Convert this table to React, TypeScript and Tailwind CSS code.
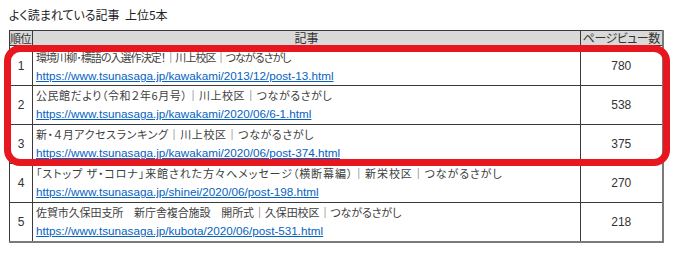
const rows = [
  {
    rank: 1,
    title: '環境川柳･標語の入選作決定！｜川上校区｜つながるさがし',
    track: 'tracking-[-0.95px]',
    url: 'https://www.tsunasaga.jp/kawakami/2013/12/post-13.html',
    views: 780,
  },
  {
    rank: 2,
    title: '公民館だより（令和２年6月号）｜川上校区｜つながるさがし',
    track: 'tracking-[0.55px]',
    url: 'https://www.tsunasaga.jp/kawakami/2020/06/6-1.html',
    views: 538,
  },
  {
    rank: 3,
    title: '新・４月アクセスランキング｜川上校区｜つながるさがし',
    track: 'tracking-[0.6px]',
    url: 'https://www.tsunasaga.jp/kawakami/2020/06/post-374.html',
    views: 375,
  },
  {
    rank: 4,
    title: '「ストップ ザ・コロナ」来館された方々へメッセージ（横断幕編）｜新栄校区｜つながるさがし',
    track: 'tracking-[0.9px]',
    url: 'https://www.tsunasaga.jp/shinei/2020/06/post-198.html',
    views: 270,
  },
  {
    rank: 5,
    title: '佐賀市久保田支所　新庁舎複合施設　開所式｜久保田校区｜つながるさがし',
    track: 'tracking-[-0.1px]',
    url: 'https://www.tsunasaga.jp/kubota/2020/06/post-531.html',
    views: 218,
  },
];

const jp = "[font-family:'Noto_Sans_CJK_JP','Liberation_Sans',sans-serif] [font-feature-settings:'palt']";

export default function App() {
  return (
    <div className="relative h-[253px] w-[680px] overflow-hidden bg-white pl-[9px] pt-[7px] text-[#333]">
      {/* 見出し */}
      <h2 className={`${jp} text-[12px] leading-[16px] text-[#222]`}>
        よく読まれている記事&nbsp;&nbsp;上位5本
      </h2>

      {/* ランキング表 */}
      <table className="mt-[7px] w-[653px] table-fixed border-collapse border border-r-2 border-b-2 border-[#3a3a3a] border-r-[#7a7a7a] border-b-[#7a7a7a]">
        <colgroup>
          <col className="w-[23px]" />
          <col className="w-[548px]" />
          <col className="w-[82px]" />
        </colgroup>
        <thead>
          <tr className="h-[15px] bg-[#d9d9d9]">
            <th className={`${jp} border border-[#3a3a3a] p-0 text-left text-[11px] font-normal leading-[14px] tracking-[-0.5px]`}>
              順位
            </th>
            <th className={`${jp} border border-[#3a3a3a] p-0 text-center text-[12px] font-normal leading-[14px]`}>
              記事
            </th>
            <th className={`${jp} border border-[#3a3a3a] p-0 text-center text-[12px] font-normal leading-[14px] tracking-[-0.5px]`}>
              ページビュー数
            </th>
          </tr>
        </thead>
        <tbody>
          {rows.map((r) => (
            <tr key={r.rank} className="h-[39px]">
              <td className="border border-[#3a3a3a] p-0 text-center align-middle text-[12px] [font-family:'Liberation_Sans',sans-serif]">
                {r.rank}
              </td>
              <td
                className={`border border-[#3a3a3a] pb-0 pl-[3px] pr-0 align-top ${r.rank === 1 ? 'pt-[2px]' : 'pt-0'}`}
              >
                <div className={`${jp} ${r.track} whitespace-nowrap text-[11px] leading-[19px] text-[#404040]`}>
                  {r.title}
                </div>
                <a
                  href="#"
                  className="block whitespace-nowrap text-[11.7px] leading-[18px] text-[#0563c1] underline [font-family:'Liberation_Sans',sans-serif]"
                >
                  {r.url}
                </a>
              </td>
              <td className="border border-[#3a3a3a] p-0 text-center align-middle text-[12px] [font-family:'Liberation_Sans',sans-serif]">
                {r.views}
              </td>
            </tr>
          ))}
        </tbody>
      </table>

      {/* 赤枠のハイライト */}
      <div className="pointer-events-none absolute left-[4px] top-[45px] h-[121px] w-[666px] rounded-[16px] border-[7px] border-[#e8161f]" />
    </div>
  );
}
